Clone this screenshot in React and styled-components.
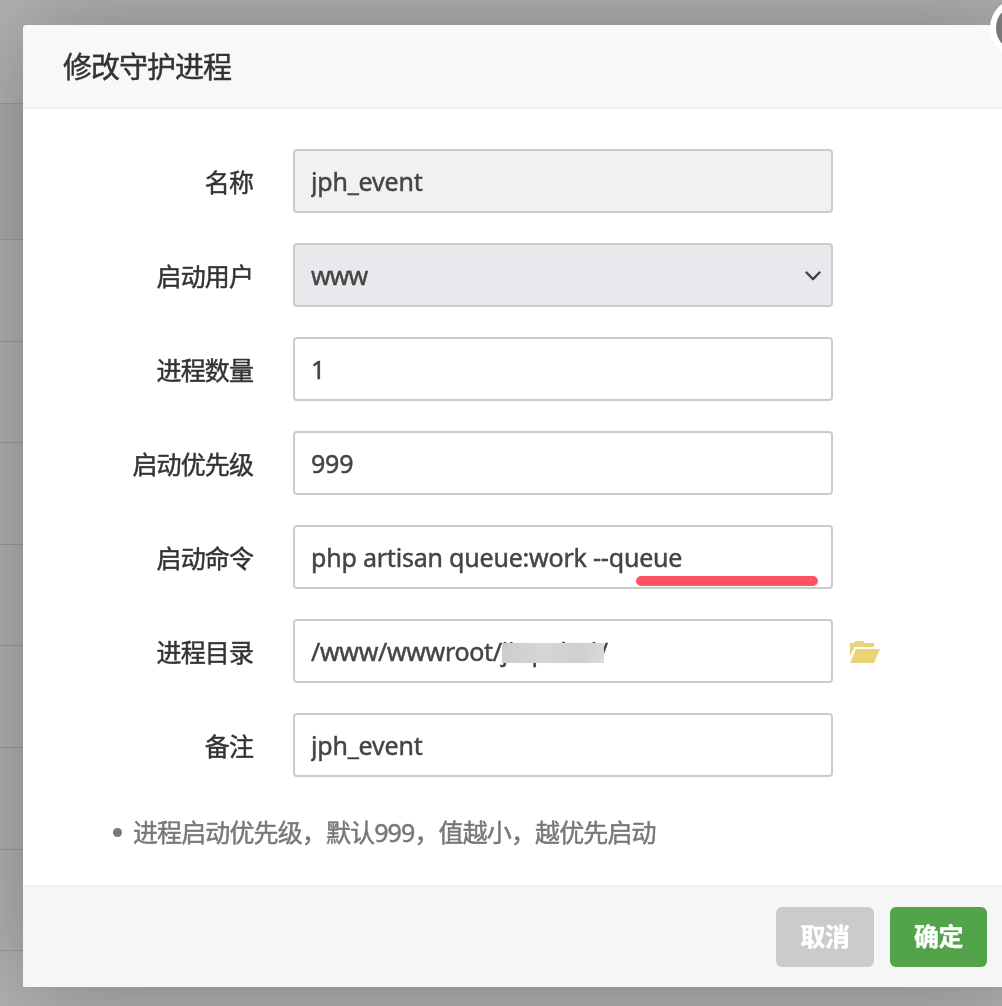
import React from "react";
import styled, { createGlobalStyle } from "styled-components";

const rows = [103, 136, 102, 101, 102, 101, 102, 102, 101, 90];

export function App() {
  return (
    <>
      <GlobalStyle />
      <Page>
        {rows.map((height, i) => (
          <TableRow key={i} $height={height} $head={i === 1} />
        ))}
      </Page>
      <Dialog>
        <CloseButton />
        <DialogHeader>修改守护进程</DialogHeader>
        <DialogBody>
          <FormRow>
            <Label>名称</Label>
            <Field>
              <Input defaultValue="jph_event" disabled />
            </Field>
          </FormRow>
          <FormRow>
            <Label>启动用户</Label>
            <Field>
              <Select defaultValue="www">
                <option>www</option>
              </Select>
              <Arrow viewBox="0 0 16 10">
                <path d="M1.5 1.5 8 8.2l6.5-6.7" />
              </Arrow>
            </Field>
          </FormRow>
          <FormRow>
            <Label>进程数量</Label>
            <Field>
              <Input defaultValue="1" />
            </Field>
          </FormRow>
          <FormRow>
            <Label>启动优先级</Label>
            <Field>
              <Input defaultValue="999" />
            </Field>
          </FormRow>
          <FormRow>
            <Label>启动命令</Label>
            <Field>
              <Input defaultValue="php artisan queue:work --queue" />
              <RedMark />
            </Field>
          </FormRow>
          <FormRow>
            <Label>进程目录</Label>
            <Field>
              <PathBox>
                /www/wwwroot/
                <Masked>
                  <Piece $width={30}>ji</Piece>
                  <Piece $width={29}>p</Piece>
                  <Piece $width={31}>l</Piece>
                  <Piece $width={8}>i</Piece>
                </Masked>
                /
              </PathBox>
            </Field>
            <Folder viewBox="0 0 30 23">
              <path d="M0 2h4l1.500-2h7.500l1.500 2H24v4H4.500L0 15z" />
              <path d="M6 8h24l-6 14H0z" />
            </Folder>
          </FormRow>
          <FormRow>
            <Label>备注</Label>
            <Field>
              <Input defaultValue="jph_event" />
            </Field>
          </FormRow>
          <Tips>
            <li>进程启动优先级，默认999，值越小，越优先启动</li>
          </Tips>
        </DialogBody>
        <DialogFooter>
          <Button $color="#cbcbcb" $width={98}>
            取消
          </Button>
          <Button $color="#52a349" $width={97}>
            确定
          </Button>
        </DialogFooter>
      </Dialog>
    </>
  );
}

const GlobalStyle = createGlobalStyle`
  * {
    box-sizing: border-box;
  }

  body {
    margin: 0;
    height: 1006px;
    overflow: hidden;
    background: #b2b2b2;
    font-family: "Noto Sans", "Noto Sans CJK SC", sans-serif;
    font-size: 25px;
    color: #333;
    -webkit-text-stroke: 0.45px;
  }
`;

const Page = styled.div`
  display: flex;
  flex-direction: column;
`;

const TableRow = styled.div`
  height: ${(props) => props.$height}px;
  background: ${(props) => (props.$head ? "#acacac" : "#b2b2b2")};

  & + & {
    border-top: 1px solid #9b9b9b;
  }
`;

const Dialog = styled.div`
  position: fixed;
  top: 25px;
  left: 23px;
  width: 1000px;
  height: 962px;
  display: flex;
  flex-direction: column;
  background: #fff;
  border-radius: 4px 4px 0 0;
  box-shadow: 2px 2px 100px rgba(0, 0, 0, 0.3);
`;

const CloseButton = styled.button`
  position: absolute;
  top: -27px;
  right: -27px;
  width: 60px;
  height: 60px;
  padding: 0;
  border: 6px solid #fff;
  border-radius: 50%;
  background: #787878;
`;

const DialogHeader = styled.div`
  height: 84px;
  padding-left: 40px;
  line-height: 81px;
  font-family: "Noto Sans CJK SC", sans-serif;
  font-size: 29px;
  letter-spacing: -1px;
  background: #f8f8f8;
  border-bottom: 2px solid #eee;
  border-radius: 4px 4px 0 0;
`;

const DialogBody = styled.div`
  flex: 1;
  padding-top: 40px;
`;

const FormRow = styled.div`
  display: flex;
  align-items: center;
  height: 64px;
  margin-bottom: 30px;
`;

const Label = styled.label`
  width: 230px;
  margin-right: 40px;
  text-align: right;
  font-family: "Noto Sans CJK SC", sans-serif;
  letter-spacing: -0.9px;
  line-height: 64px;
`;

const Field = styled.div`
  position: relative;
  width: 540px;
  height: 64px;
`;

const Input = styled.input`
  display: block;
  width: 100%;
  height: 100%;
  padding: 0 16px;
  border: 2px solid #ccc;
  border-radius: 4px;
  outline: none;
  background: #fff;
  color: #444;
  font-family: inherit;
  font-size: 25px;
  letter-spacing: -0.2px;
  -webkit-text-stroke: 0.45px;

  &:disabled {
    background: #f1f1f1;
  }
`;

const Select = styled(Input).attrs({ as: "select" })`
  appearance: none;
  background: #e8e8ed;
  letter-spacing: -0.9px;
`;

const Arrow = styled.svg`
  position: absolute;
  top: 28px;
  right: 12px;
  width: 16px;
  height: 10px;
  fill: none;
  stroke: #444;
  stroke-width: 2.4;
  stroke-linecap: round;
  stroke-linejoin: round;
`;

const RedMark = styled.div`
  position: absolute;
  left: 343px;
  top: 51px;
  width: 182px;
  height: 10px;
  border-radius: 5px;
  background: #ff5364;
`;

const PathBox = styled.div`
  display: flex;
  align-items: center;
  height: 100%;
  padding: 0 16px;
  border: 2px solid #ccc;
  border-radius: 4px;
  color: #444;
  letter-spacing: -0.32px;
`;

const Masked = styled.span`
  position: relative;
  display: flex;
  width: 97px;

  &::after {
    content: "";
    position: absolute;
    left: 0;
    top: 9px;
    width: 102px;
    height: 20px;
    background: linear-gradient(100deg, #ccc, #d6d6d6 40%, #cfcfcf 75%, #dadada);
  }
`;

const Piece = styled.span`
  width: ${(props) => props.$width}px;
`;

const Folder = styled.svg`
  width: 30px;
  height: 23px;
  margin: 2px 0 0 17px;
  fill: #e9d374;
`;

const Tips = styled.ul`
  margin: 0;
  padding: 9px 0 0 110px;
  list-style: none;
  color: #777;
  line-height: 32px;

  li {
    display: flex;
    align-items: center;
    margin-left: -20px;
    letter-spacing: -0.88px;
  }

  li::before {
    content: "";
    width: 9px;
    height: 9px;
    margin-right: 11px;
    border-radius: 50%;
    background: #777;
  }
`;

const DialogFooter = styled.div`
  display: flex;
  justify-content: flex-end;
  gap: 16px;
  height: 102px;
  padding: 20px 36px 0 0;
  background: #f5f7f7;
  border-top: 2px solid #edf1f1;
`;

const Button = styled.button`
  width: ${(props) => props.$width}px;
  height: 60px;
  padding: 0 0 4px;
  border: none;
  border-radius: 6px;
  background: ${(props) => props.$color};
  color: #fff;
  font-family: "Noto Sans CJK SC", sans-serif;
  font-size: 25px;
  font-weight: 700;
  letter-spacing: -0.5px;
  -webkit-text-stroke: 0.4px;
`;

export default App;
